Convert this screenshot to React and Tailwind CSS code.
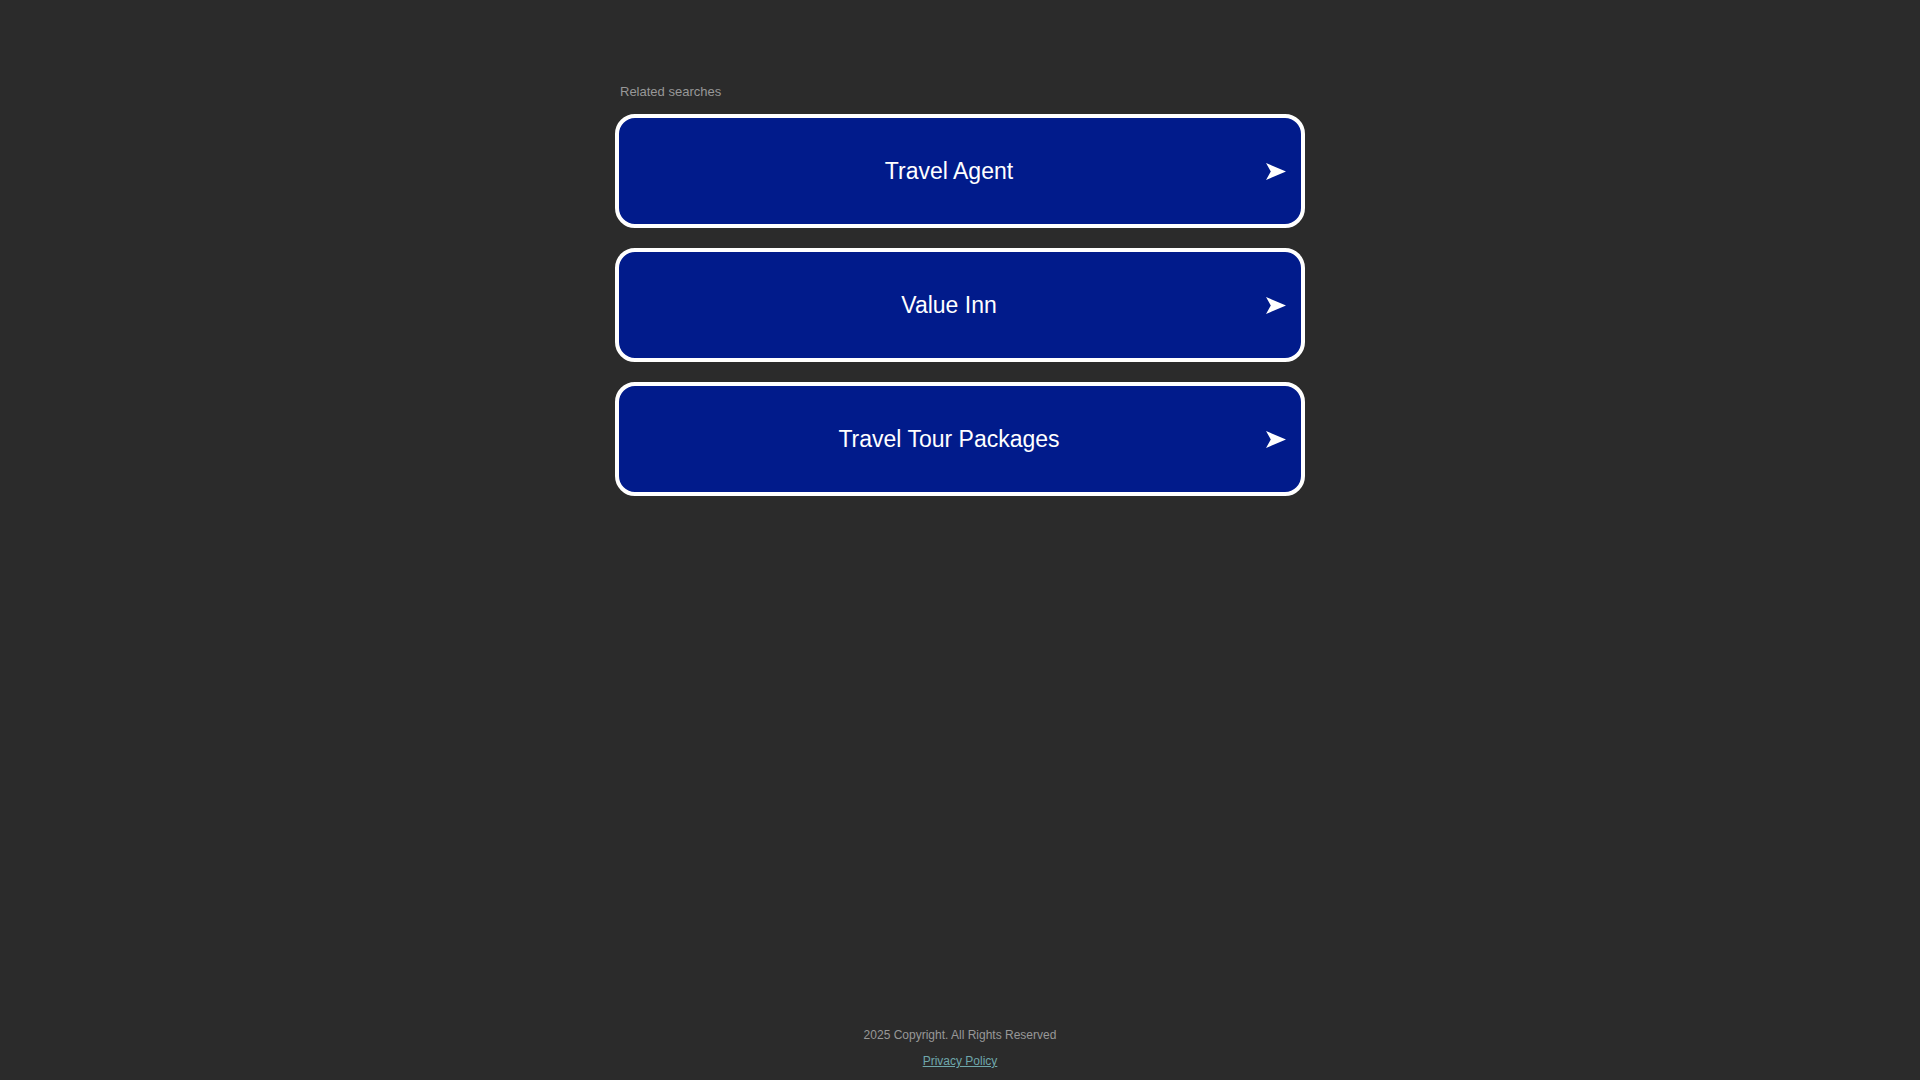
export default function App() {
  const items = ["Travel Agent", "Value Inn", "Travel Tour Packages"];
  return (
    <div
      className="min-h-screen bg-[#2b2b2b] flex flex-col"
      style={{ fontFamily: '"Liberation Sans", Arial, sans-serif' }}
    >
      <main className="flex-1 flex justify-center pt-[84px]">
        <div className="w-[690px] flex flex-col">
          <div className="pl-[5px] text-[13px] leading-[15px] text-[#989898] mb-[15px]">
            Related searches
          </div>
          <div className="flex flex-col gap-[20px]">
            {items.map((t) => (
              <a
                key={t}
                href="#"
                className="h-[114px] border-4 border-white rounded-[20px] bg-[#011b8b] flex items-center"
              >
                <span className="flex-1 pl-[13px] text-center text-[23px] leading-[26px] text-white">
                  {t}
                </span>
                <svg
                  width="20"
                  height="17"
                  viewBox="0 0 20 17"
                  className="mr-[15px]"
                >
                  <path d="M0 0 L20 8.5 L0 17 L4.8 8.5 Z" fill="#ffffff" />
                </svg>
              </a>
            ))}
          </div>
        </div>
      </main>
      <footer className="flex flex-col items-center gap-[12px] pb-[12px] text-[12px] leading-[14px]">
        <div className="text-[#989898]">2025 Copyright. All Rights Reserved</div>
        <a href="#" className="text-[#6fa7ab] underline">
          Privacy Policy
        </a>
      </footer>
    </div>
  );
}
